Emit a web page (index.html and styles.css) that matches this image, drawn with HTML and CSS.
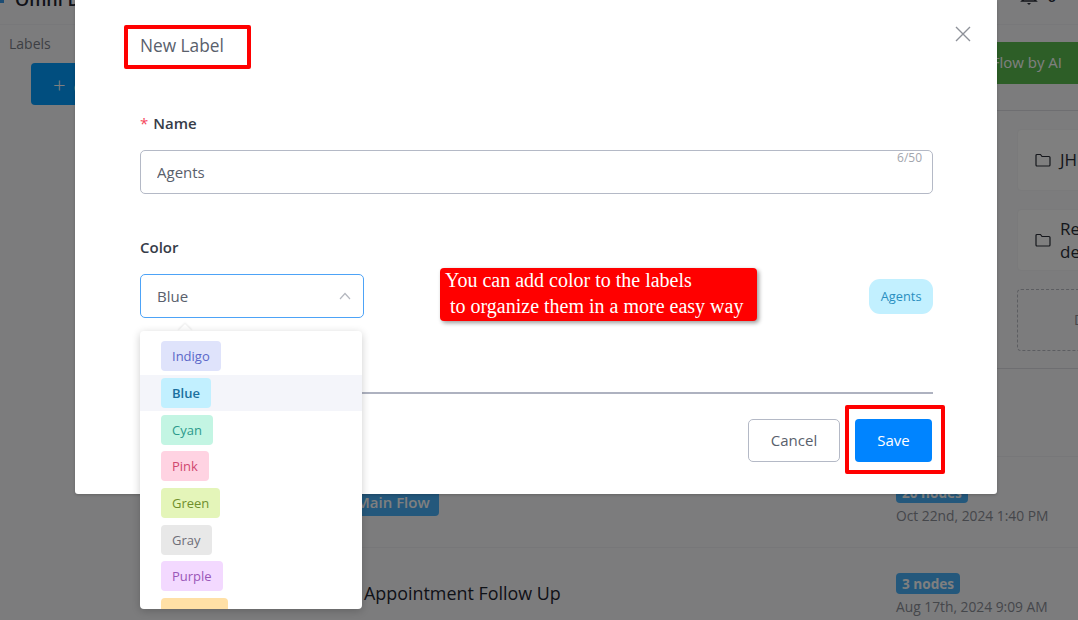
FILE: index.html
```html
<!DOCTYPE html>
<html lang="en">
  <head>
    <meta charset="UTF-8" />
    <title>New Label</title>
    <link rel="stylesheet" href="styles.css">
  </head>
  <body>
    <div class="page">
      <!-- page behind the modal -->
      <header class="topbar">
        <span class="logo-dot"></span>
        <span class="app-name">Omni Dashboard</span>
        <div class="top-right">
          <svg class="bell" width="20" height="20" viewBox="0 0 20 20">
            <path d="M5 13V8a5 5 0 0 1 10 0v5l2 2H3z" fill="none" stroke="#2b2f38" stroke-width="1.5" />
            <path d="M8 17h4l-2 2z" fill="#2b2f38" />
          </svg>
          <span class="count">6</span>
        </div>
      </header>
      <div class="layout">
        <aside class="sidebar">
          <div class="side-title">Labels</div>
          <button type="button" class="btn-create"><span class="plus">+</span> Create</button>
        </aside>
        <main class="content">
          <div class="toolbar">
            <button type="button" class="btn-ai">Create Flow by AI</button>
          </div>
          <div class="folders">
            <div class="folder">
              <svg class="folder-icon" width="16" height="14" viewBox="0 0 16 14">
                <path d="M1 2.5A1 1 0 0 1 2 1.500h3.500l1.500 2h7a1 1 0 0 1 1 1v7.500a1 1 0 0 1-1 1H2a1 1 0 0 1-1-1z" fill="none" stroke="#2b2f38" stroke-width="1.200" />
              </svg>
              <span>JH Flows</span>
            </div>
            <div class="folder">
              <svg class="folder-icon" width="16" height="14" viewBox="0 0 16 14">
                <path d="M1 2.5A1 1 0 0 1 2 1.500h3.500l1.500 2h7a1 1 0 0 1 1 1v7.500a1 1 0 0 1-1 1H2a1 1 0 0 1-1-1z" fill="none" stroke="#2b2f38" stroke-width="1.200" />
              </svg>
              <span>Recently<br />deleted</span>
            </div>
            <div class="folder-new">Drop</div>
          </div>
          <div class="flow-row"></div>
          <div class="flow-row">
            <div class="flow-main first">
              <span class="tag-flow">Main Flow</span>
            </div>
            <div class="flow-meta">
              <span class="tag-nodes">20 nodes</span>
              <span class="flow-date">Oct 22nd, 2024 1:40 PM</span>
            </div>
          </div>
          <div class="flow-row">
            <div class="flow-main">
              <span class="flow-name">Appointment Follow Up</span>
            </div>
            <div class="flow-meta">
              <span class="tag-nodes">3 nodes</span>
              <span class="flow-date">Aug 17th, 2024 9:09 AM</span>
            </div>
          </div>
        </main>
      </div>

      <div class="overlay"></div>

      <!-- modal -->
      <div class="modal">
        <svg class="close" width="16" height="16" viewBox="0 0 16 16">
          <path d="M1 1l14 14M15 1L1 15" fill="none" stroke="#8e9199" stroke-width="1.400" />
        </svg>
        <div class="modal-title">New Label</div>

        <label class="field-label name-label"><span class="star">*</span>Name</label>
        <div class="input-wrap">
          <input class="text-input" type="text" value="Agents" />
          <span class="char-count">6/50</span>
        </div>

        <label class="field-label color-label">Color</label>
        <div class="color-row">
          <div class="select">
            <span>Blue</span>
            <svg width="12" height="8" viewBox="0 0 12 8">
              <path d="M1 7l5-5.500L11 7" fill="none" stroke="#b4b7bf" stroke-width="1.200" />
            </svg>
          </div>
          <span class="preview-chip">Agents</span>
        </div>

        <div class="divider"></div>

        <div class="modal-footer">
          <button type="button" class="btn-cancel">Cancel</button>
          <div class="save-mark">
            <button type="button" class="btn-save">Save</button>
          </div>
        </div>

        <div class="callout">
          <div class="callout-text">You can add color to the labels<br />&nbsp;to organize them in a more easy way</div>
        </div>

        <span class="dropdown-arrow"></span>
        <ul class="dropdown">
          <li><span class="chip indigo">Indigo</span></li>
          <li class="active"><span class="chip blue">Blue</span></li>
          <li><span class="chip cyan">Cyan</span></li>
          <li><span class="chip pink">Pink</span></li>
          <li><span class="chip green">Green</span></li>
          <li><span class="chip gray">Gray</span></li>
          <li><span class="chip purple">Purple</span></li>
          <li><span class="chip orange">Orange</span></li>
        </ul>
      </div>
    </div>
  </body>
</html>
```

FILE: styles.css
```css
/* Basic styling */
* {
  box-sizing: border-box;
}
body {
  font-family: "Open Sans", Arial, sans-serif;
  background-color: #f8f8fb;
  margin: 0;
  padding: 0;
}
.page {
  position: relative;
  display: flex;
  flex-direction: column;
  width: 1078px;
  height: 620px;
  overflow: hidden;
}

/* Page behind the modal */
.topbar {
  display: flex;
  flex-shrink: 0;
  align-items: flex-start;
  height: 25px;
  padding: 0 22px 0 0;
  border-bottom: 1px solid #f1f1f4;
}
.logo-dot {
  width: 4px;
  height: 3px;
  background-color: #3a9be8;
}
.app-name {
  margin: -13px 0 0 11px;
  font-size: 18px;
  font-weight: 600;
  color: #1f2430;
}
.top-right {
  display: flex;
  gap: 8px;
  margin: -14px 0 0 auto;
}
.bell {
  display: block;
}
.count {
  font-size: 15px;
  line-height: 20px;
  font-weight: 600;
  color: #2b2f38;
}
.layout {
  display: flex;
  flex: 1;
}
.sidebar {
  width: 140px;
  flex-shrink: 0;
  padding: 9px 0 0 9px;
}
.side-title {
  font-size: 14px;
  line-height: 20px;
  color: #7b7f88;
}
.btn-create {
  display: block;
  width: 110px;
  height: 42px;
  margin: 9px 0 0 22px;
  padding: 0 0 0 22px;
  border: none;
  border-radius: 4px;
  background-color: #029cff;
  color: #fff;
  font-family: inherit;
  font-size: 15px;
  text-align: left;
}
.plus {
  margin-right: 4px;
  font-size: 22px;
  font-weight: 300;
}
.content {
  flex: 1;
  min-width: 0;
}
.toolbar {
  display: flex;
  justify-content: flex-end;
  height: 86px;
  padding-top: 17px;
  border-bottom: 1px solid #dcdde2;
}
.btn-ai {
  width: 200px;
  height: 42px;
  padding: 0 16px 2px 0;
  border: none;
  background-color: #5abc4e;
  color: #fff;
  font-family: inherit;
  font-size: 15px;
  text-align: right;
}
.folders {
  display: flex;
  flex-direction: column;
  gap: 18.500px;
  height: 258px;
  padding: 18px 0 0 877px;
  border-bottom: 1px solid #dcdde2;
}
.folder {
  display: flex;
  flex-shrink: 0;
  align-items: center;
  gap: 9px;
  width: 240px;
  height: 61.500px;
  padding-left: 17px;
  border: 1px solid #f4f4f6;
  border-radius: 4px;
  background-color: #fefefe;
  font-size: 17px;
  line-height: 23px;
  color: #2b2f38;
}
.folder-icon {
  flex-shrink: 0;
}
.folder-new {
  flex-shrink: 0;
  width: 240px;
  height: 61.500px;
  padding: 20px 0 0 56px;
  border: 1px dashed #b9bbc2;
  border-radius: 4px;
  font-size: 14px;
  color: #8b8e96;
}
.flow-row {
  display: flex;
  flex-shrink: 0;
  align-items: center;
  height: 91px;
  border-bottom: 1px solid #eeeef2;
}
.flow-row:nth-child(3) {
  height: 88px;
}
.flow-main {
  width: 756px;
  padding-left: 224px;
}
.flow-main.first {
  padding-left: 207px;
}
.flow-name {
  font-size: 17.900px;
  font-weight: 500;
  color: #1f2430;
}
.tag-flow {
  display: inline-block;
  padding: 3px 9px;
  border-radius: 4px;
  background-color: #48b0f8;
  color: #fff;
  font-size: 15px;
  line-height: 22px;
  font-weight: 600;
}
.flow-meta {
  display: flex;
  flex-direction: column;
  align-items: flex-start;
  gap: 3px;
  padding-top: 3px;
}
.tag-nodes {
  padding: 0 6px;
  border-radius: 4px;
  background-color: #48b0f8;
  color: #fff;
  font-size: 13.600px;
  line-height: 21px;
  font-weight: 700;
}
.flow-date {
  font-size: 13.800px;
  line-height: 20px;
  color: #8b8e96;
}
.overlay {
  position: absolute;
  top: 0;
  left: 0;
  width: 100%;
  height: 100%;
  background-color: rgba(0, 0, 0, 0.5);
}

/* Modal */
.modal {
  position: absolute;
  top: 0;
  left: 75px;
  width: 922px;
  padding: 25px 64px 20px 65px;
  border-radius: 0 0 3px 3px;
  background-color: #fff;
  box-shadow: 0 1px 3px rgba(0, 0, 0, 0.2);
}
.close {
  position: absolute;
  top: 26px;
  left: 880px;
}
.modal-title {
  display: inline-block;
  width: 127px;
  height: 44px;
  margin-left: -16px;
  padding-left: 12px;
  border: 4px solid #f00;
  border-radius: 2px;
  font-size: 17.300px;
  line-height: 34px;
  color: #59606c;
}
.field-label {
  display: block;
  font-size: 15px;
  line-height: 20px;
  font-weight: 600;
  color: #363c48;
}
.name-label {
  margin-top: 44px;
}
.color-label {
  margin-top: 43px;
}
.star {
  margin-right: 5px;
  color: #f5475b;
  font-weight: 400;
}
.input-wrap {
  position: relative;
  margin-top: 17px;
}
.text-input {
  display: block;
  width: 100%;
  height: 44px;
  padding: 0 16px 1px;
  border: 1px solid #b4b9c6;
  border-radius: 5px;
  font-family: inherit;
  font-size: 15px;
  color: #59606c;
}
.char-count {
  position: absolute;
  top: 0;
  right: 11px;
  font-size: 12px;
  line-height: 15px;
  color: #a2a5ad;
}
.color-row {
  display: flex;
  align-items: center;
  justify-content: space-between;
  margin-top: 17px;
}
.select {
  display: flex;
  align-items: center;
  justify-content: space-between;
  width: 224px;
  height: 44px;
  padding: 0 12px 1px 16px;
  border: 1px solid #4da3f7;
  border-radius: 5px;
  font-size: 15px;
  color: #59606c;
}
.preview-chip {
  padding: 0 11.500px;
  border-radius: 11px;
  background-color: #c2f0ff;
  color: #2a8fc0;
  font-size: 12.800px;
  line-height: 35px;
}
.divider {
  height: 2px;
  margin-top: 74px;
  background-color: #aeb2c0;
}
.modal-footer {
  display: flex;
  justify-content: flex-end;
  align-items: flex-start;
  gap: 5px;
  margin: 11px -12px 0 0;
}
.btn-cancel {
  width: 92px;
  height: 43px;
  margin-top: 14px;
  padding-bottom: 2px;
  border: 1px solid #b4b9c6;
  border-radius: 5px;
  background-color: #fff;
  color: #59606c;
  font-family: inherit;
  font-size: 15px;
}
.save-mark {
  width: 100px;
  height: 69px;
  padding: 10px 9px 8px 6px;
  border: 4px solid #f00;
  border-radius: 2px;
}
.btn-save {
  display: block;
  width: 77px;
  height: 43px;
  padding-bottom: 2px;
  border: none;
  border-radius: 4px;
  background-color: #0084ff;
  color: #fff;
  font-family: inherit;
  font-size: 15px;
  font-weight: 500;
}

/* Red note over the form */
.callout {
  position: absolute;
  top: 268px;
  left: 365px;
  width: 317px;
  height: 53px;
  padding: 0 5px;
  border-radius: 4px;
  background-color: #f00;
  box-shadow: 2px 2px 4px rgba(0, 0, 0, 0.4);
}
.callout-text {
  margin-top: -1px;
  color: #fff;
  font-family: "Liberation Serif", "Times New Roman", serif;
  font-size: 20px;
  line-height: 26px;
  white-space: nowrap;
}

/* Color dropdown */
.dropdown-arrow {
  position: absolute;
  top: 326px;
  left: 105px;
  width: 10px;
  height: 10px;
  background-color: #fff;
  box-shadow: -1px -1px 2px rgba(0, 0, 0, 0.08);
  transform: rotate(45deg);
}
.dropdown {
  position: absolute;
  top: 331px;
  left: 65px;
  width: 222px;
  height: 278px;
  margin: 0;
  padding: 7px 0 0;
  overflow: hidden;
  list-style: none;
  border-radius: 4px;
  background-color: #fff;
  box-shadow: 0 2px 8px rgba(0, 0, 0, 0.2);
}
.dropdown li {
  display: flex;
  align-items: center;
  height: 36.670px;
  padding-left: 21px;
}
.dropdown li.active {
  background-color: #f4f5fa;
}
.chip {
  padding: 0 11px;
  border-radius: 4px;
  font-size: 13px;
  line-height: 30px;
}
.chip.indigo {
  background-color: #dfe3fb;
  color: #5a67c8;
}
.chip.blue {
  background-color: #c2f0ff;
  color: #1a6f9e;
  font-weight: 600;
}
.chip.cyan {
  background-color: #c3f5e3;
  color: #2c9a8c;
}
.chip.pink {
  background-color: #ffd3e2;
  color: #d0476f;
}
.chip.green {
  background-color: #e4f5b9;
  color: #6f8f2c;
}
.chip.gray {
  background-color: #e8e8e8;
  color: #6e6e78;
}
.chip.purple {
  background-color: #f3d9ff;
  color: #9a57b8;
}
.chip.orange {
  background-color: #ffe0a6;
  color: #c08a2c;
}
```
